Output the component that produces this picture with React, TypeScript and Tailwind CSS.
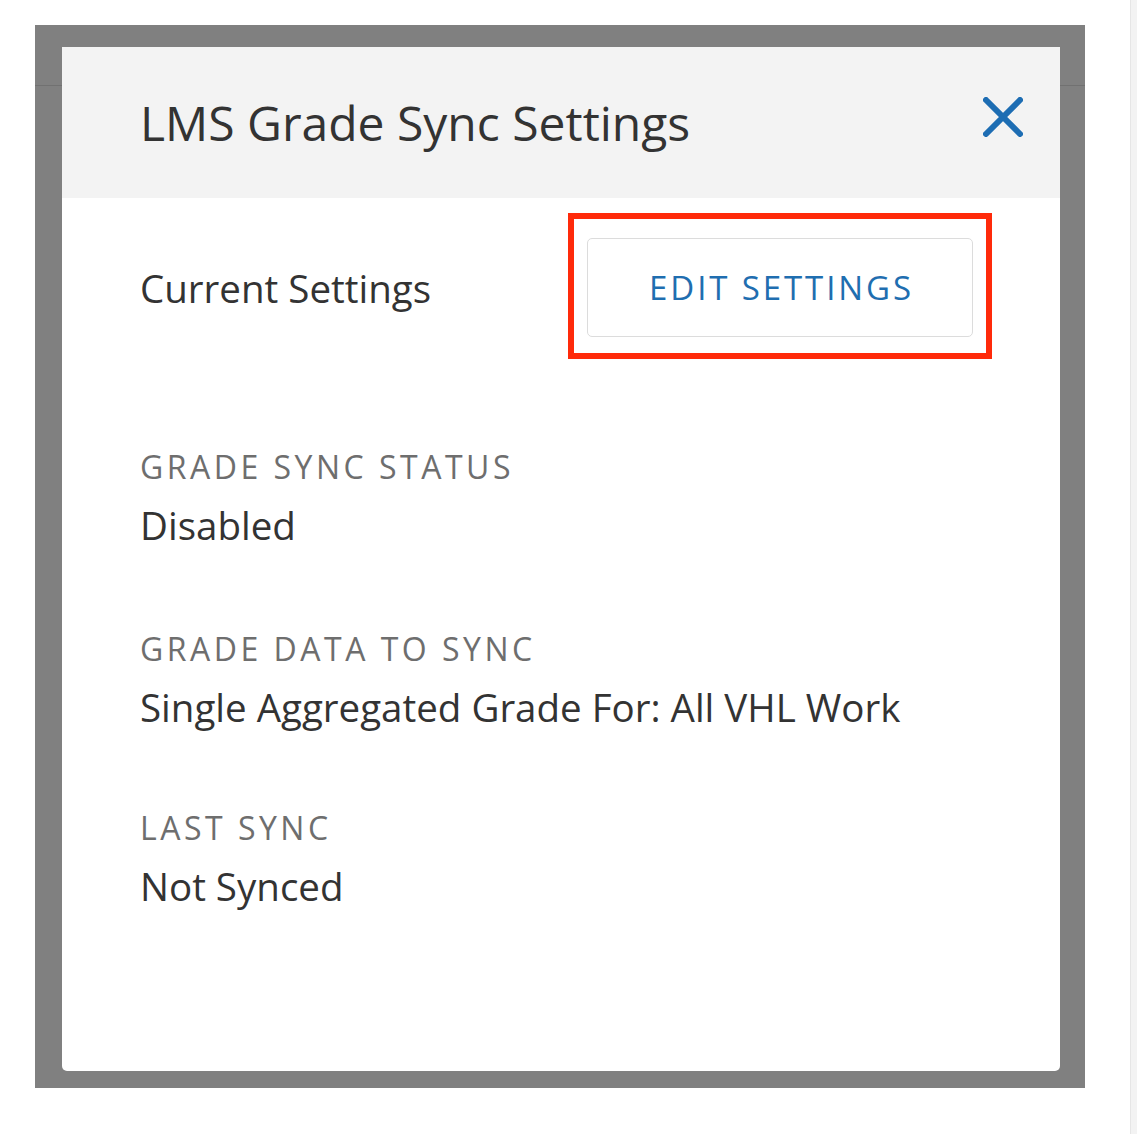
import React from "react";

const font = { fontFamily: '"Open Sans", "Noto Sans", sans-serif' };

function Field({ label, value, top }: { label: string; value: string; top: string }) {
  return (
    <div className={`flex flex-col ${top}`}>
      <div className="text-[32px] leading-[40px] tracking-[3.5px] text-[#6e6e6e]">{label}</div>
      <div className="mt-[14px] text-[38.5px] leading-[48px] text-[#333333]">{value}</div>
    </div>
  );
}

export default function App() {
  return (
    <div className="w-[1137px] h-[1134px] bg-white flex" style={font}>
      <div className="pt-[25px] pl-[35px]">
        <div className="relative w-[1050px] h-[1063px] bg-[#808080] pt-[22px] pl-[27px] pr-[25px] pb-[17px]">
          <div className="absolute left-0 right-0 top-[60px] h-px bg-[#717171]" />
          <div className="relative w-[998px] h-[1024px] bg-white rounded-b-[5px] flex flex-col">
            <div className="h-[151px] bg-[#f3f3f3] flex items-center justify-between pl-[78px] pr-[37px]">
              <div className="text-[48px] leading-[56px] text-[#333333]">LMS Grade Sync Settings</div>
              <div className="mb-[12px]">
                <svg width="40" height="40" viewBox="0 0 40 40">
                  <path d="M3 3 L37 37 M37 3 L3 37" stroke="#1d6db3" strokeWidth="6" strokeLinecap="round" fill="none" />
                </svg>
              </div>
            </div>
            <div className="flex flex-col pl-[78px]">
              <div className="flex items-center justify-between pt-[15px] pr-[68px]">
                <div className="text-[38.5px] leading-[48px] text-[#333333] mt-[4px]">Current Settings</div>
                <div className="border-[6px] border-[#ff2a0a] pt-[19px] pb-[16px] px-[13px]">
                  <div className="w-[386px] h-[99px] border border-[#dcdcdc] rounded-[5px] bg-white flex items-center justify-center">
                    <span className="text-[33px] leading-[40px] tracking-[2.9px] text-[#1f6eb0] pl-[3px]">EDIT SETTINGS</span>
                  </div>
                </div>
              </div>
              <Field label="GRADE SYNC STATUS" value="Disabled" top="mt-[88px]" />
              <Field label="GRADE DATA TO SYNC" value="Single Aggregated Grade For: All VHL Work" top="mt-[80px]" />
              <Field label="LAST SYNC" value="Not Synced" top="mt-[77px]" />
            </div>
          </div>
        </div>
      </div>
      <div className="ml-auto w-[7px] h-full bg-[#f3f3f3] border-l border-[#e6e6e6]" />
    </div>
  );
}
